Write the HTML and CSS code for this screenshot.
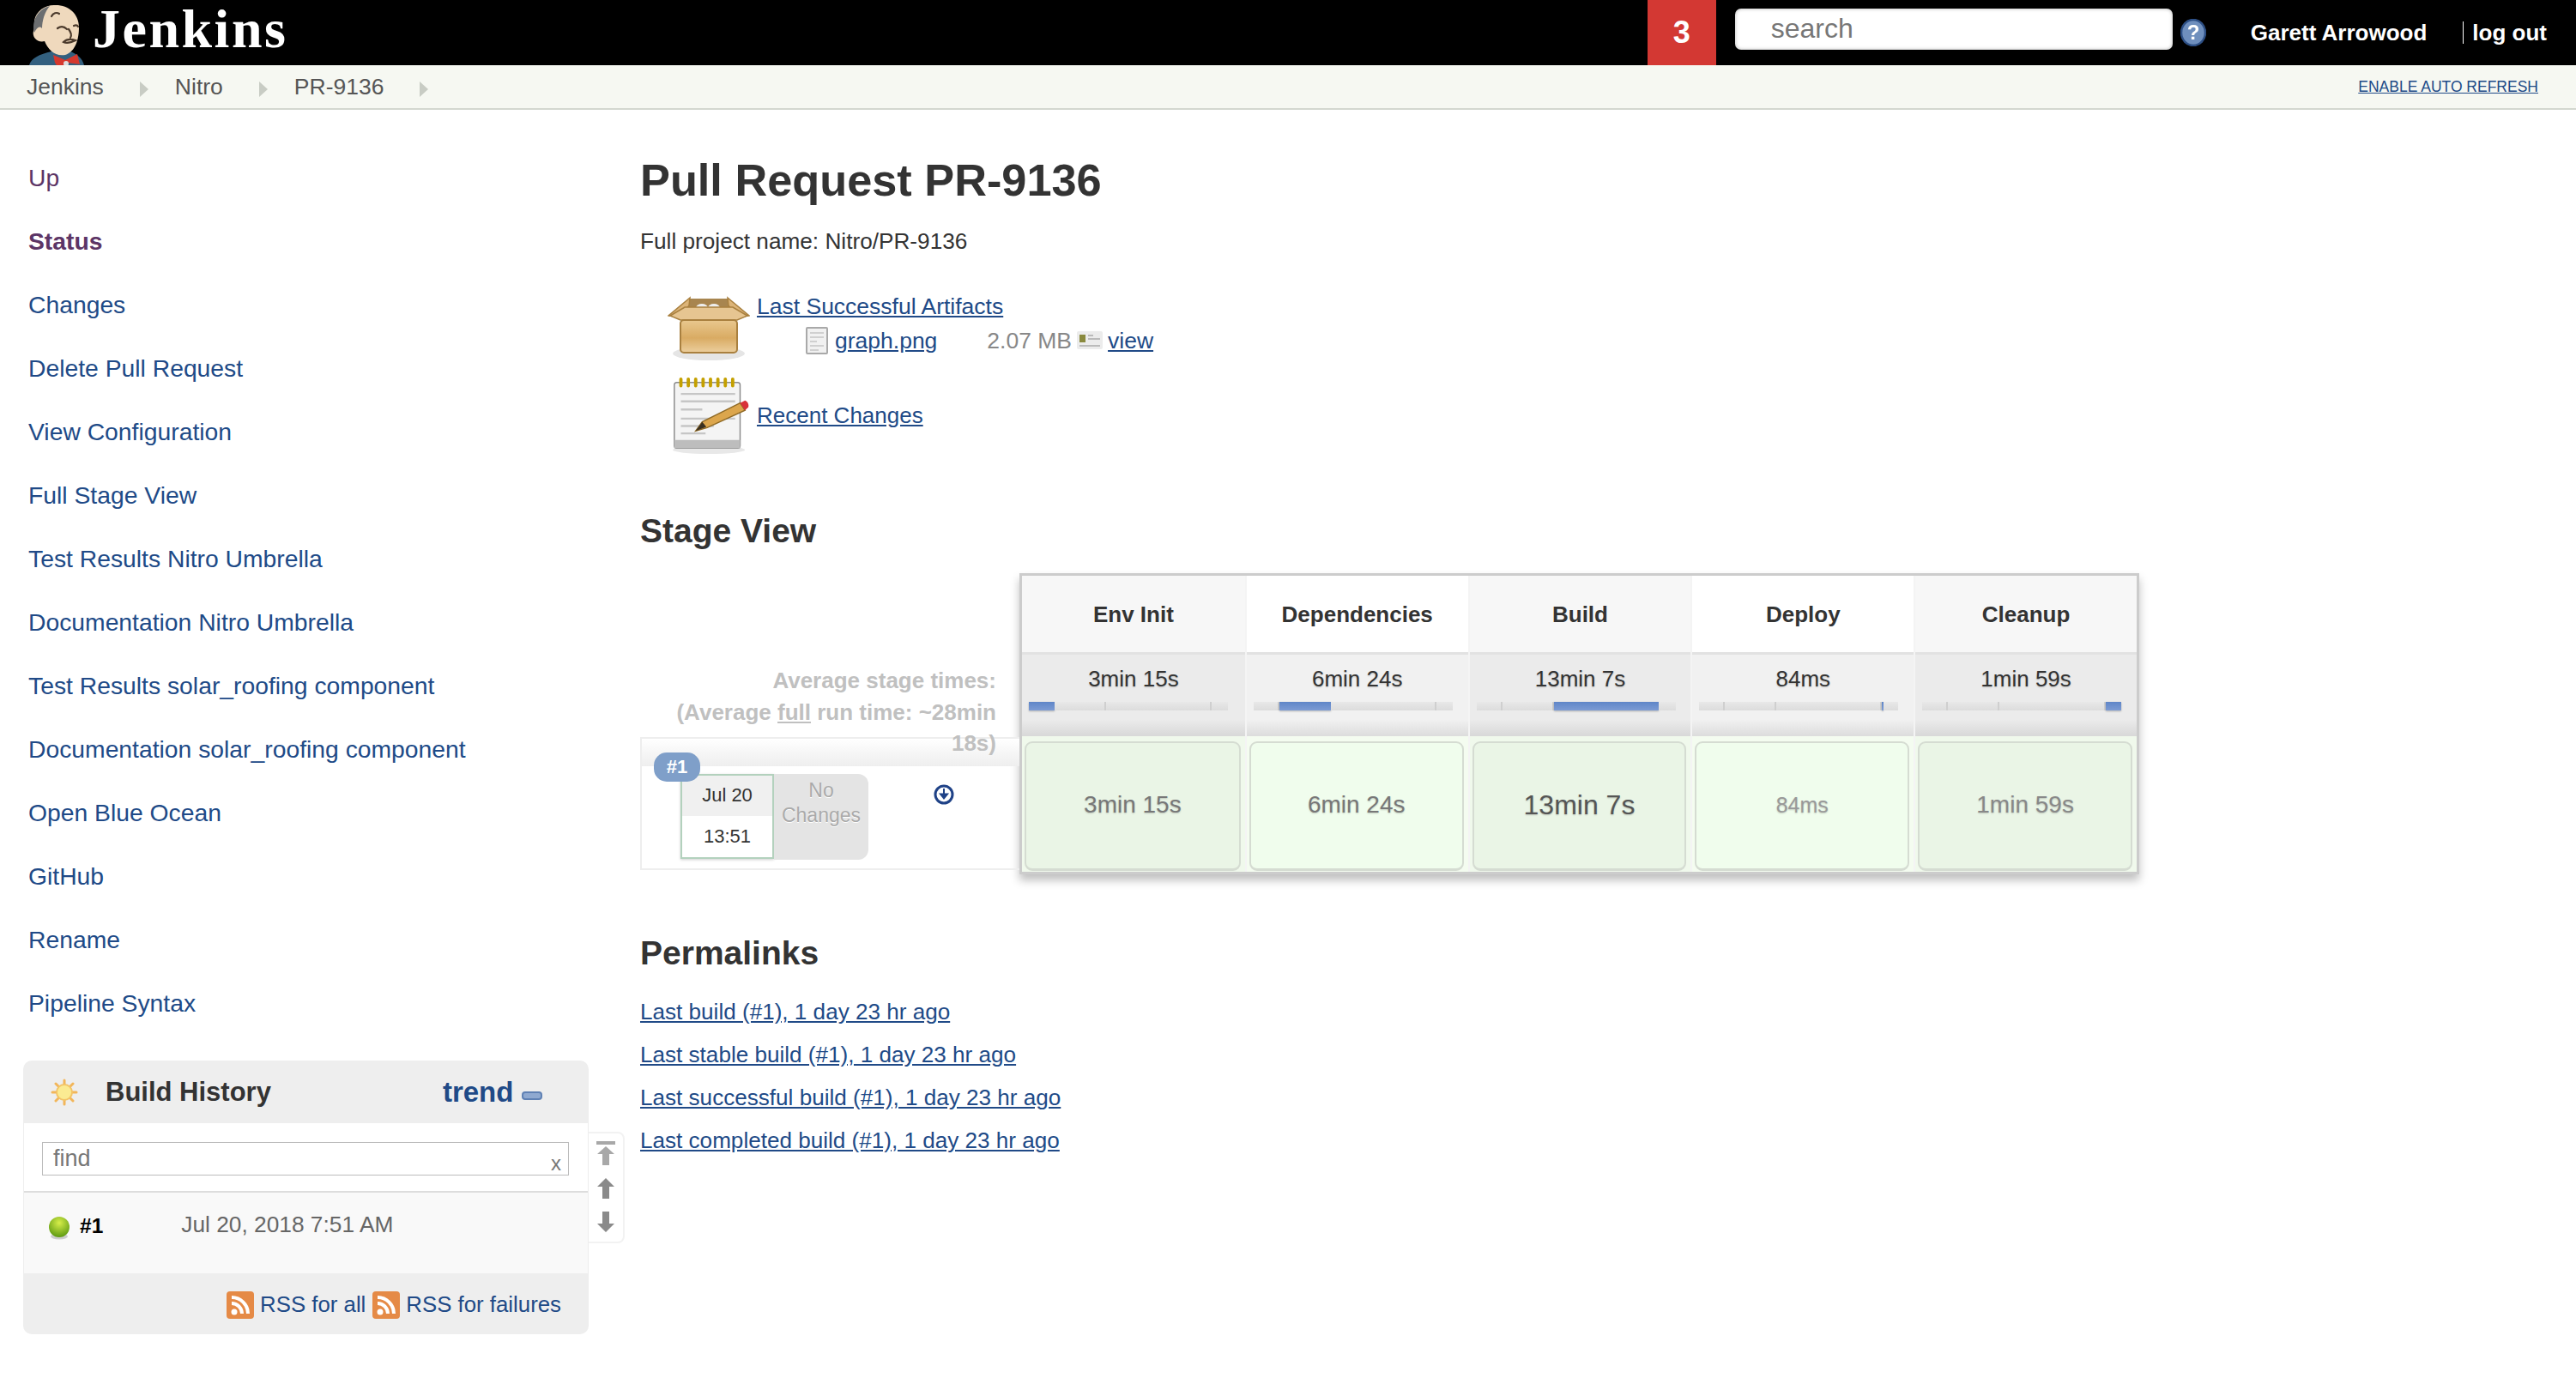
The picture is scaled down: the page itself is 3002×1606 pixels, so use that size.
FILE: index.html
```html
<!DOCTYPE html>
<html lang="en">
<head>
<meta charset="utf-8">
<title>Nitro » PR-9136 [Jenkins]</title>
<link rel="stylesheet" href="styles.css">
</head>
<body>
<header class="topbar">
  <a class="brand" href="#">
    <svg class="butler" viewBox="0 0 90 76" aria-hidden="true">
      <path d="M14 76 C16 68 26 63 40 60 L62 60 C70 63 76 68 78 76 Z" fill="#33607f"/>
      <path d="M20 24 C22 12 34 5 45 6 C60 6 72 16 72 32 C72 46 68 60 56 64 C44 66 36 58 32 48 C24 50 17 44 19 36 C20 32 20 28 20 24 Z" fill="#efd9bd"/>
      <path d="M20 38 C17 28 21 12 38 7 C32 14 29 24 29 33 C26 30 23 32 20 38 Z" fill="#6c6e70"/>
      <path d="M40 19 C42 15 46 14 49 16 M47 33 C51 30 55 31 58 34 M66 30 C68 29 70 29 71 31 M54 49 C57 46 62 45 68 47 C64 49 58 51 54 49 Z M60 34 C63 38 64 41 62 44" fill="none" stroke="#4b3a2c" stroke-width="2.2" stroke-linecap="round"/>
      <path d="M42 64 L56 70 L70 63 L73 75 L58 73 L56 76 L46 76 L44 73 Z" fill="#d6382d"/>
      <circle cx="57" cy="74" r="3" fill="#ddd"/>
    </svg>
    <span class="brand-name">Jenkins</span>
  </a>
  <div class="top-spacer"></div>
  <a class="alert-count" href="#">3</a>
  <div class="search-box">search</div>
  <svg class="help" viewBox="0 0 30 32" aria-hidden="true">
    <ellipse cx="15" cy="16" rx="14" ry="15" fill="#6f8fbd" stroke="#2d4f85" stroke-width="2.500"/>
    <text x="15" y="24" text-anchor="middle" class="help-mark">?</text>
  </svg>
  <a class="user" href="#">Garett Arrowood</a>
  <a class="logout" href="#">log out</a>
</header>

<nav class="crumbs">
  <a href="#">Jenkins</a><span class="crumb-arrow"></span>
  <a href="#">Nitro</a><span class="crumb-arrow"></span>
  <a href="#">PR-9136</a><span class="crumb-arrow"></span>
  <a class="refresh" href="#">ENABLE AUTO REFRESH</a>
</nav>

<div class="main">
  <aside class="side">
    <ul class="tasks">
      <li><a class="visited" href="#">Up</a></li>
      <li><a class="visited current" href="#">Status</a></li>
      <li><a href="#">Changes</a></li>
      <li><a href="#">Delete Pull Request</a></li>
      <li><a href="#">View Configuration</a></li>
      <li><a href="#">Full Stage View</a></li>
      <li><a href="#">Test Results Nitro Umbrella</a></li>
      <li><a href="#">Documentation Nitro Umbrella</a></li>
      <li><a href="#">Test Results solar_roofing component</a></li>
      <li><a href="#">Documentation solar_roofing component</a></li>
      <li><a href="#">Open Blue Ocean</a></li>
      <li><a href="#">GitHub</a></li>
      <li><a href="#">Rename</a></li>
      <li><a href="#">Pipeline Syntax</a></li>
    </ul>

    <div class="history-wrap">
      <section class="history">
        <div class="history-head">
          <svg class="sun" viewBox="0 0 32 32" aria-hidden="true">
            <g stroke="#f2b65a" stroke-width="3" stroke-linecap="round"><path d="M16 2v6M16 24v6M2 16h6M24 16h6M6 6l4 4M22 22l4 4M26 6l-4 4M10 22l-4 4"/></g>
            <circle cx="16" cy="16" r="9" fill="#fbeb92" stroke="#f3c468" stroke-width="2"/>
          </svg>
          <span class="history-title">Build History</span>
          <a class="trend" href="#">trend</a>
          <svg class="collapse" viewBox="0 0 24 10" aria-hidden="true"><rect x="1" y="1" width="22" height="8" rx="3" fill="#8fa9d0" stroke="#5f81b4" stroke-width="2"/></svg>
        </div>
        <div class="history-find">
          <div class="find-box"><span>find</span><span class="find-x">x</span></div>
        </div>
        <div class="history-row">
          <svg class="ball" viewBox="0 0 26 28" aria-hidden="true">
            <defs><radialGradient id="ballg" cx="50%" cy="30%" r="70%"><stop offset="0" stop-color="#d7ee4a"/><stop offset="1" stop-color="#5e9a12"/></radialGradient></defs>
            <ellipse cx="13" cy="24" rx="10" ry="3.5" fill="#ccc"/>
            <circle cx="13" cy="13" r="12" fill="url(#ballg)"/>
          </svg>
          <a class="build-no" href="#">#1</a>
          <a class="build-date" href="#">Jul 20, 2018 7:51 AM</a>
        </div>
        <div class="history-foot">
          <svg class="rss" viewBox="0 0 32 32" aria-hidden="true"><rect width="32" height="32" rx="4" fill="#e58a46"/><circle cx="9" cy="24" r="3.5" fill="#fff"/><path d="M6 14a12 12 0 0 1 12 12M6 7a19 19 0 0 1 19 19" fill="none" stroke="#fff" stroke-width="4"/></svg>
          <a href="#">RSS for all</a>
          <svg class="rss" viewBox="0 0 32 32" aria-hidden="true"><rect width="32" height="32" rx="4" fill="#e58a46"/><circle cx="9" cy="24" r="3.5" fill="#fff"/><path d="M6 14a12 12 0 0 1 12 12M6 7a19 19 0 0 1 19 19" fill="none" stroke="#fff" stroke-width="4"/></svg>
          <a href="#">RSS for failures</a>
        </div>
      </section>
      <div class="pager">
        <svg class="pg-top" viewBox="0 0 24 30" aria-hidden="true"><path d="M1 1h22v4H1zM12 7l10 9h-6v13H8V16H2z" fill="#a8a8a8"/></svg>
        <svg viewBox="0 0 24 26" aria-hidden="true"><path d="M12 1l10 10h-6v14H8V11H2z" fill="#8a8a8a"/></svg>
        <svg viewBox="0 0 24 26" aria-hidden="true"><path d="M12 25L2 15h6V1h8v14h6z" fill="#8a8a8a"/></svg>
      </div>
    </div>
  </aside>

  <main class="content">
    <h1>Pull Request PR-9136</h1>
    <p class="fullname">Full project name: Nitro/PR-9136</p>

    <div class="artifact">
      <svg class="icon-box" viewBox="0 0 96 78" aria-hidden="true">
        <defs><linearGradient id="boxg" x1="0" y1="0" x2="0" y2="1"><stop offset="0" stop-color="#e9c88f"/><stop offset=".55" stop-color="#d9ab63"/><stop offset="1" stop-color="#eccf9e"/></linearGradient></defs>
        <ellipse cx="48" cy="68" rx="42" ry="8" fill="#e5e5e5"/>
        <path d="M26 4h44l10 18H16z" fill="#a8854f"/>
        <ellipse cx="40" cy="15" rx="7" ry="5" fill="#eee"/><ellipse cx="54" cy="15" rx="7" ry="5" fill="#eee"/>
        <path d="M26 3L1 24l14 2 10-14zM70 3l25 21-14 2-10-14z" fill="#dcb478" stroke="#a9803f" stroke-width="1.5"/>
        <path d="M3 24l17-10h56l17 10-12 5H15z" fill="#e6c591" stroke="#a9803f" stroke-width="1.5"/>
        <rect x="15" y="29" width="66" height="38" rx="4" fill="url(#boxg)" stroke="#a9803f" stroke-width="2"/>
      </svg>
      <div class="artifact-text">
        <a href="#">Last Successful Artifacts</a>
        <div class="artifact-file">
          <svg class="icon-doc" viewBox="0 0 26 32" aria-hidden="true"><rect x="1" y="1" width="24" height="30" rx="1" fill="#f1f1f1" stroke="#a9a9a9" stroke-width="2"/><path d="M5 7h16M5 12h16M5 17h8M5 22h16M5 27h10" stroke="#d0d0d0" stroke-width="2"/></svg>
          <a class="file-name" href="#">graph.png</a>
          <span class="file-size">2.07 MB</span>
          <svg class="icon-card" viewBox="0 0 30 24" aria-hidden="true"><rect y="1" width="30" height="21" rx="2" fill="#ececec"/><rect x="3" y="5" width="7" height="9" fill="#8a8a3e"/><path d="M13 6h6M13 10h14M3 18h24" stroke="#bbb" stroke-width="2"/></svg>
          <a href="#">view</a>
        </div>
      </div>
    </div>

    <div class="recent">
      <svg class="icon-notes" viewBox="0 0 96 96" aria-hidden="true">
        <ellipse cx="46" cy="90" rx="44" ry="5" fill="#e8e8e8"/>
        <rect x="4" y="8" width="80" height="80" rx="3" fill="#f4f4f4" stroke="#8a8a8a" stroke-width="1.5"/>
        <rect x="4" y="78" width="80" height="10" fill="#bdbdbd"/>
        <g stroke="#c4a000" stroke-width="4" stroke-linecap="round"><path d="M12 4v8M21 4v8M30 4v8M39 4v8M48 4v8M57 4v8M66 4v8M75 4v8"/></g>
        <path d="M12 22h66M12 31h66M12 41h26M12 52h66M12 61h40M12 70h30" stroke="#c6c6c6" stroke-width="2.5"/>
        <path d="M30 67L38 56 84 33 90 42 44 63Z" fill="#dca64d" stroke="#8f6a26" stroke-width="1.5"/>
        <path d="M30 67L38 56 43 62Z" fill="#3a3020"/>
        <path d="M84 33L90 30C93 31 95 35 94 38L90 42Z" fill="#d8323a"/>
      </svg>
      <a href="#">Recent Changes</a>
    </div>

    <h2 class="stage-title">Stage View</h2>

    <div class="stage">
      <div class="stage-left">
        <div class="avg-label">Average stage times:<br>(Average <u>full</u> run time: ~28min 18s)</div>
        <div class="run-row">
          <span class="run-badge">#1</span>
          <div class="run-date"><div class="run-day">Jul 20</div><div class="run-time">13:51</div></div>
          <div class="run-changes">No Changes</div>
          <svg class="run-toggle" viewBox="0 0 24 24" aria-hidden="true"><circle cx="12" cy="12" r="10" fill="#fff" stroke="#1f4287" stroke-width="3"/><path d="M12 5v9M8 11.500l4 5 4-5z" fill="#1f4287" stroke="#1f4287" stroke-width="2"/></svg>
        </div>
      </div>

      <div class="stage-table">
        <div class="col odd">
          <div class="col-name">Env Init</div>
          <div class="col-avg">3min 15s
            <div class="bar"><i class="on" style="width:30px"></i><i style="width:60px"></i><i style="width:123px"></i><i style="width:19px"></i></div>
          </div>
          <div class="col-cell"><div class="cell-box t-mid">3min 15s</div></div>
        </div>
        <div class="col even">
          <div class="col-name">Dependencies</div>
          <div class="col-avg">6min 24s
            <div class="bar"><i style="width:30px"></i><i class="on" style="width:60px"></i><i style="width:123px"></i><i style="width:19px"></i></div>
          </div>
          <div class="col-cell"><div class="cell-box t-mid">6min 24s</div></div>
        </div>
        <div class="col odd">
          <div class="col-name">Build</div>
          <div class="col-avg">13min 7s
            <div class="bar"><i style="width:30px"></i><i style="width:60px"></i><i class="on" style="width:122px"></i><i style="width:20px"></i></div>
          </div>
          <div class="col-cell"><div class="cell-box t-big">13min 7s</div></div>
        </div>
        <div class="col even">
          <div class="col-name">Deploy</div>
          <div class="col-avg">84ms
            <div class="bar"><i style="width:30px"></i><i style="width:60px"></i><i style="width:123px"></i><i class="on" style="width:2px"></i><i style="width:17px"></i></div>
          </div>
          <div class="col-cell"><div class="cell-box t-small">84ms</div></div>
        </div>
        <div class="col odd">
          <div class="col-name">Cleanup</div>
          <div class="col-avg">1min 59s
            <div class="bar"><i style="width:30px"></i><i style="width:60px"></i><i style="width:124px"></i><i class="on" style="width:18px"></i></div>
          </div>
          <div class="col-cell"><div class="cell-box t-low">1min 59s</div></div>
        </div>
      </div>
    </div>

    <h2 class="perma-title">Permalinks</h2>
    <ul class="permalinks">
      <li><a href="#">Last build (#1), 1 day 23 hr ago</a></li>
      <li><a href="#">Last stable build (#1), 1 day 23 hr ago</a></li>
      <li><a href="#">Last successful build (#1), 1 day 23 hr ago</a></li>
      <li><a href="#">Last completed build (#1), 1 day 23 hr ago</a></li>
    </ul>
  </main>
</div>
</body>
</html>
```
FILE: styles.css
```css
* { box-sizing: border-box; }
html, body { margin: 0; padding: 0; }
body {
  font-family: "Liberation Sans", Arial, sans-serif;
  font-size: 26px;
  color: #333;
  background: #fff;
  min-height: 1606px;
}
a { color: #204a87; }
ul { list-style: none; margin: 0; padding: 0; }

/* raster-looking icons in the original are slightly soft */
.butler, .icon-box, .icon-notes, .icon-doc, .icon-card, .sun, .ball, .rss, .help, .collapse, .pager svg { filter: blur(.6px); }

/* top bar */
.topbar {
  display: flex;
  align-items: center;
  height: 76px;
  background: #000;
  color: #fff;
}
.brand { display: flex; align-items: center; height: 76px; padding-left: 20px; text-decoration: none; }
.butler { width: 90px; height: 76px; display: block; flex: none; }
.brand-name {
  margin-left: -2px;
  margin-top: -8px;
  font-family: "Liberation Serif", Georgia, serif;
  font-weight: 700;
  font-size: 64px;
  letter-spacing: 2.500px;
  line-height: 64px;
  color: #fff;
}
.top-spacer { flex: 1; }
.alert-count {
  display: flex;
  align-items: center;
  justify-content: center;
  width: 80px;
  height: 76px;
  background: #d33833;
  color: #fff;
  font-weight: 700;
  font-size: 36px;
  text-decoration: none;
}
.search-box {
  width: 510px;
  height: 48px;
  margin-left: 22px;
  margin-top: -9px;
  padding-left: 42px;
  background: #fff;
  border-radius: 7px;
  box-shadow: inset 0 0 4px rgba(0,0,0,.3);
  color: #777;
  font-size: 32px;
  line-height: 46px;
}
.help { width: 30px; height: 32px; margin-left: 9px; flex: none; }
.help-mark { fill: #fff; font-size: 24px; font-weight: 700; }
.user {
  margin-left: 52px;
  color: #fff;
  font-weight: 700;
  font-size: 26px;
  text-decoration: none;
}
.logout {
  margin-left: 42px;
  margin-right: 34px;
  padding-left: 10px;
  border-left: 1px solid #fff;
  color: #fff;
  font-weight: 700;
  font-size: 26px;
  line-height: 26px;
  text-decoration: none;
}

/* breadcrumb */
.crumbs {
  display: flex;
  align-items: center;
  height: 52px;
  padding: 1px 44px 0 31px;
  background: #f6f8f2;
  border-bottom: 2px solid #d3d7cf;
}
.crumbs a { color: #555; font-size: 26.500px; text-decoration: none; }
.crumb-arrow {
  width: 0;
  height: 0;
  margin: 4px 31px 0 42px;
  border-left: 10px solid #c8ccc4;
  border-top: 9px solid transparent;
  border-bottom: 9px solid transparent;
}
.crumbs a.refresh {
  margin-left: auto;
  color: #204a87;
  font-size: 17.500px;
  text-decoration: underline;
}

/* layout */
.main { display: flex; align-items: flex-start; }
.side { width: 746px; flex: none; padding: 42px 0 0 27px; }
.content { flex: 1; padding-top: 52px; min-width: 0; }

/* side tasks */
.tasks li { height: 74px; padding-left: 6px; line-height: 74px; font-size: 28.300px; }
.tasks a { text-decoration: none; }
.tasks a.visited { color: #5c3566; }
.tasks a.current { font-weight: 700; }

/* build history */
.history-wrap { display: flex; align-items: flex-start; margin-top: 30px; }
.history {
  width: 659px;
  flex: none;
  border-radius: 10px;
  overflow: hidden;
  background: #eee;
}
.history-head { display: flex; align-items: center; height: 73px; padding-left: 32px; }
.sun { width: 32px; height: 32px; flex: none; }
.history-title { margin-left: 32px; font-weight: 700; font-size: 31px; color: #333; }
.trend { margin-left: 200px; font-weight: 700; font-size: 33px; text-decoration: none; }
.collapse { width: 24px; height: 10px; margin: 8px 0 0 10px; }
.history-find {
  margin: 0 1px;
  padding: 22px 22px 18px 21px;
  height: 81px;
  background: #fff;
  border-bottom: 2px solid #ddd;
}
.find-box {
  display: flex;
  justify-content: space-between;
  height: 39px;
  padding: 0 8px 0 12px;
  border: 1px solid #bbb;
  color: #777;
  font-size: 27px;
  line-height: 36px;
}
.find-x { padding-top: 6px; font-size: 24px; }
.history-row {
  display: flex;
  align-items: flex-start;
  height: 94px;
  margin: 0 1px;
  padding: 27px 0 0 28px;
  background: #f9f9f9;
}
.ball { width: 26px; height: 28px; flex: none; }
.build-no { margin-left: 11px; margin-top: -3px; color: #000; font-weight: 700; font-size: 24.500px; line-height: 30px; text-decoration: none; }
.build-date { margin-left: 91px; margin-top: -5px; color: #666; font-size: 26.300px; line-height: 30px; text-decoration: none; }
.history-foot {
  display: flex;
  align-items: center;
  justify-content: flex-end;
  height: 71px;
  padding: 2px 32px 0 0;
  font-size: 25.800px;
}
.history-foot a { text-decoration: none; }
.rss { width: 32px; height: 32px; margin: 0 7px 0 8px; flex: none; }

.pager {
  display: flex;
  flex-direction: column;
  align-items: center;
  gap: 13px;
  width: 42px;
  height: 130px;
  margin-top: 83px;
  padding-top: 8px;
  border: 2px solid #f2f2f2;
  border-left: 0;
  border-radius: 0 8px 8px 0;
}
.pager svg { width: 24px; height: 26px; }
.pager .pg-top { height: 30px; }

/* content */
h1 { margin: 0; font-size: 52.300px; line-height: 60px; font-weight: 700; color: #333; }
.fullname { margin: 23px 0 0; font-size: 26.200px; line-height: 36px; }
.artifact { display: flex; margin: 38px 0 0 32px; }
.icon-box { width: 96px; height: 78px; margin-top: 7px; flex: none; }
.artifact-text { margin-left: 8px; font-size: 26.500px; line-height: 40px; }
.artifact-file { display: flex; align-items: center; padding-left: 57px; }
.icon-doc { width: 26px; height: 32px; flex: none; }
.file-name { margin-left: 8px; }
.file-size { margin-left: 58px; color: #888; }
.icon-card { width: 30px; height: 24px; margin: 0 6px; flex: none; }
.recent { display: flex; align-items: center; margin: 16px 0 0 36px; height: 92px; font-size: 26px; }
.icon-notes { width: 92px; height: 92px; flex: none; }
.recent a { margin-left: 8px; }

h2 { margin: 0; font-weight: 700; font-size: 39px; line-height: 50px; color: #333; }
.stage-title { margin-top: 64px; }
.perma-title { margin-top: 67px; }

/* stage view */
.stage { display: flex; align-items: flex-start; margin-top: 24px; }
.stage-left { width: 442px; flex: none; }
.avg-label {
  position: relative;
  z-index: 1;
  width: 416px;
  margin-left: 26px;
  padding: 107px 27px 0 0;
  text-align: right;
  color: #c0c0c0;
  font-weight: 700;
  font-size: 26px;
  line-height: 36.500px;
}
.run-row {
  position: relative;
  display: flex;
  align-items: flex-start;
  height: 155px;
  margin-top: -26px;
  padding: 41px 0 0 45px;
  border: 2px solid #eee;
  border-right: 0;
  background: linear-gradient(#fff, #eee) no-repeat 0 0 / 100% 32px;
}
.run-badge {
  position: absolute;
  left: 14px;
  top: 16px;
  z-index: 2;
  width: 54px;
  height: 34px;
  border-radius: 15px;
  background: #7f9fc9;
  color: #fff;
  font-size: 22px;
  font-weight: 700;
  line-height: 34px;
  text-align: center;
}
.run-date {
  width: 109px;
  height: 99px;
  border: 2px solid #b3d1bd;
  text-align: center;
  font-size: 22px;
  color: #333;
  background: #fff;
  box-shadow: 0 1px 3px rgba(0,0,0,.2);
}
.run-day { height: 47px; line-height: 46px; background: #f0f0f0; }
.run-time { line-height: 48px; }
.run-changes {
  width: 110px;
  height: 100px;
  padding: 5px 0 0;
  border-radius: 0 12px 12px 0;
  background: #e4e4e4;
  color: #aaa;
  font-size: 23px;
  line-height: 29px;
  text-align: center;
  text-shadow: 0 1px 0 #fff;
}
.run-toggle { width: 24px; height: 24px; margin: 12px 0 0 76px; }

.stage-table {
  display: grid;
  grid-template-columns: repeat(5, 1fr);
  width: 1305px;
  height: 351px;
  border: 3px solid #ccc;
  background: #fff;
  box-shadow: 0 7px 10px rgba(0,0,0,.25);
}
.col { display: flex; flex-direction: column; border-left: 2px solid #f4f4f4; }
.col:first-child { border-left: 0; }
.col-name {
  height: 89px;
  padding-top: 28px;
  text-align: center;
  font-weight: 700;
  font-size: 26px;
  line-height: 34px;
  color: #333;
}
.col-avg {
  height: 98px;
  padding-top: 11px;
  border-top: 3px solid #e2e2e2;
  text-align: center;
  font-size: 26px;
  line-height: 34px;
  color: #333;
  text-shadow: 0 1px 2px rgba(0,0,0,.2);
}
.odd .col-name { background: #f7f7f7; }
.even .col-name { background: #fff; }
.odd .col-avg { background: linear-gradient(#ebebeb 80%, #d8d8d8); }
.even .col-avg { background: linear-gradient(#f1f1f1 80%, #dcdcdc); }
.bar { display: flex; width: 232px; height: 10px; margin: 10px 0 0 8px; background: #ddd; }
.bar i { display: block; height: 10px; border-right: 2px solid #cfcfcf; background: linear-gradient(#e8e8e8, #dcdcdc); }
.bar i:last-child { border-right: 0; }
.bar i.on { border-right: 0; background: linear-gradient(#5f86c8, #7c9bd4); box-shadow: 0 1px 2px rgba(0,0,0,.25); }
.col-cell { flex: 1; padding: 6px 5px 1px 3px; }
.odd .col-cell { background: #f0f9ec; }
.even .col-cell { background: #f4fcf0; }
.cell-box {
  display: flex;
  align-items: center;
  justify-content: center;
  height: 100%;
  border: 2px solid #d5dcd2;
  border-bottom-width: 3px;
  border-radius: 9px;
  text-shadow: 0 1px 2px rgba(0,0,0,.2);
  color: #777;
  font-size: 28px;
  padding-bottom: 2px;
}
.odd .cell-box { background: #eaf5e6; }
.even .cell-box { background: #f0fded; }
.t-big { font-size: 32px; color: #555; }
.t-small { font-size: 25px; color: #999; }
.t-low { color: #888; }

/* permalinks */
.permalinks { margin-top: 18px; font-size: 26.100px; }
.permalinks li { height: 50px; line-height: 50px; }
```
